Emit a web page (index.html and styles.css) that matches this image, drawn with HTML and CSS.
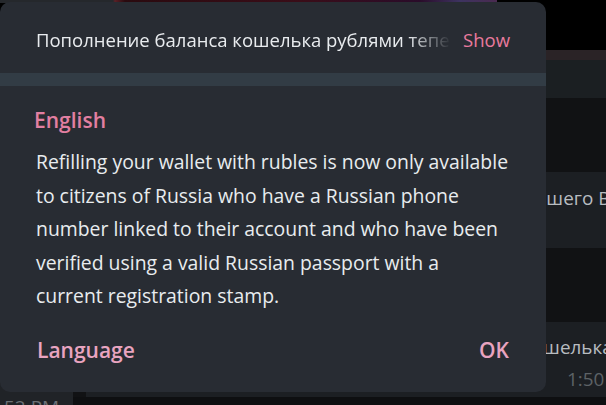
FILE: index.html
```html
<!DOCTYPE html>
<html lang="ru">
<head>
    <meta charset="UTF-8">
    <meta name="viewport" content="width=device-width, initial-scale=1.0">
    <title>Translate</title>
    <link rel="stylesheet" href="styles.css">
</head>
<body>
    <div class="chat">
        <div class="media-row">
            <div class="media-strip"></div>
        </div>
        <div class="row row-rim"></div>
        <div class="row row-top"></div>
        <div class="row row-gap row-gap-first"></div>
        <div class="row bubble-row bubble-first">
            <span class="bubble-text">вашего Ва</span>
        </div>
        <div class="row row-gap row-gap-second"></div>
        <div class="row bubble-row bubble-second">
            <span class="bubble-text">кошелька</span>
            <span class="bubble-time">1:50</span>
        </div>
        <div class="row bottom-row">
            <div class="bottom-side">52 PM</div>
        </div>
    </div>

    <div class="box">
        <div class="box-header">
            <div class="original">Пополнение баланса кошелька рублями теперь доступно только</div>
            <button class="link-btn">Show</button>
        </div>
        <div class="box-divider"></div>
        <div class="box-body">
            <div class="lang-title">English</div>
            <p class="translation">Refilling your wallet with rubles is now only available to citizens of Russia who have a Russian phone number linked to their account and who have been verified using a valid Russian passport with a current registration stamp.</p>
        </div>
        <div class="box-buttons">
            <button class="box-btn">Language</button>
            <button class="box-btn">OK</button>
        </div>
    </div>
</body>
</html>
```

FILE: styles.css
```css
body {
    margin: 0;
    width: 606px;
    height: 405px;
    overflow: hidden;
    position: relative;
    background: #0e0f11;
    font-family: "Open Sans", "Noto Sans", sans-serif;
    color: #e9ecef;
}

/* чат под окном */
.chat {
    display: flex;
    flex-direction: column;
}

.media-row {
    height: 50px;
    background: #000000;
}

.media-strip {
    height: 3px;
    width: 497px;
    background: linear-gradient(90deg, #25282c 0, #25282c 113px, #5a2026 115px, #2a0a0f 125px, #3a0d18 300px, #2a0c2a 420px, #3d3360 460px, #4a2a50 497px);
}

.row {
    width: 100%;
}

.row-rim {
    height: 10px;
    background: #2a2326;
}

.row-top {
    height: 38px;
    background: #1b1f22;
}

.row-gap {
    background: #111214;
}

.row-gap-first {
    height: 74px;
}

.row-gap-second {
    height: 74px;
}

.bubble-row {
    background: #1c1f23;
    display: flex;
    flex-direction: column;
    align-items: flex-start;
    box-sizing: border-box;
    color: #b8bcc0;
    font-size: 18.9px;
    line-height: 26px;
    white-space: nowrap;
}

.bubble-first {
    height: 76px;
    padding-top: 13px;
    padding-left: 525px;
}

.bubble-second {
    height: 75px;
    padding-top: 12px;
    padding-left: 522px;
    background: linear-gradient(90deg, #202327 0, #202327 73px, #111214 73px, #111214 86px, #1c1f23 86px);
}

.bubble-time {
    color: #5d6266;
    line-height: 26px;
    margin-top: 6px;
    margin-left: 45px;
}

.bottom-row {
    height: 8px;
    display: flex;
}

.bottom-side {
    width: 73px;
    background: #202327;
    color: #6b7075;
    font-size: 19px;
    line-height: 20px;
    padding-left: 4px;
    box-sizing: border-box;
    white-space: nowrap;
    overflow: hidden;
}

/* окно перевода */
.box {
    position: absolute;
    left: 0;
    top: 2px;
    width: 546px;
    height: 390px;
    background: #282c33;
    border-radius: 10px;
    display: flex;
    flex-direction: column;
}

.box-header {
    height: 71px;
    box-sizing: border-box;
    padding: 4px 36px 0 36px;
    display: flex;
    align-items: center;
    gap: 8px;
}

.original {
    flex: 1;
    font-size: 18.5px;
    white-space: nowrap;
    overflow: hidden;
    -webkit-mask-image: linear-gradient(90deg, #000 0, #000 372px, transparent 415px);
    mask-image: linear-gradient(90deg, #000 0, #000 372px, transparent 415px);
}

.link-btn {
    background: none;
    border: none;
    padding: 0;
    font-family: inherit;
    font-size: 18.5px;
    color: #e97a9d;
    cursor: pointer;
}

.box-divider {
    height: 13px;
    background: #323c45;
}

.box-body {
    padding: 20px 36px 0 34px;
}

.lang-title {
    font-size: 21px;
    font-weight: 600;
    line-height: 28px;
    color: #e27fa1;
}

.translation {
    margin: 11px 0 0 2px;
    font-size: 19.4px;
    line-height: 33.5px;
}

.box-buttons {
    display: flex;
    justify-content: space-between;
    padding: 23px 37px 0 37px;
}

.box-btn {
    background: none;
    border: none;
    padding: 0;
    font-family: inherit;
    font-size: 21px;
    font-weight: 600;
    line-height: 28px;
    color: #e9a4c0;
    cursor: pointer;
}
```
